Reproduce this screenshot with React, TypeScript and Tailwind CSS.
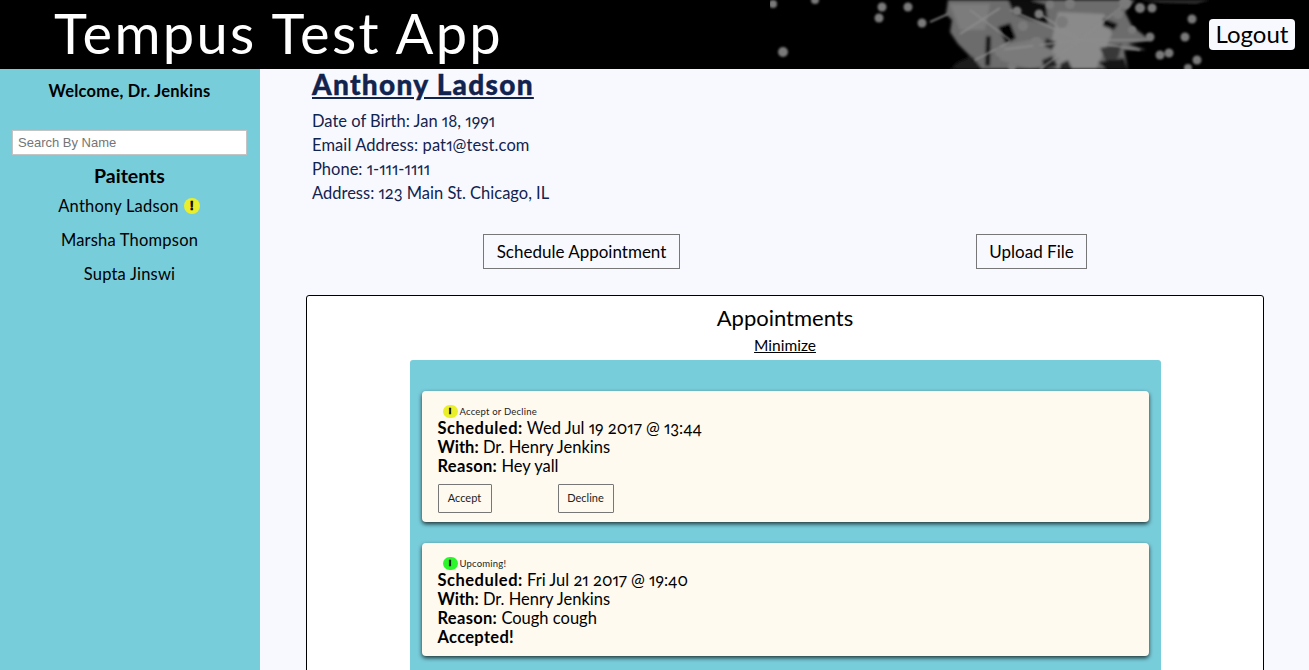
const sans = "font-['Lato','Open_Sans',sans-serif]";

function Alert({ color, wide }: { color: string; wide?: boolean }) {
  return (
    <span
      className={`inline-flex shrink-0 items-center justify-center rounded-full font-['Liberation_Sans',sans-serif] font-bold text-black [-webkit-text-stroke:0.6px_black] ${color} ${
        wide ? "h-[13px] w-[15px] text-[9px]" : "h-4 w-4 text-[12px]"
      }`}
    >
      !
    </span>
  );
}

function HeaderArt() {
  const dots = [
    [773, 4, 4], [815, 0, 4], [882, 7, 4.5], [908, 7, 4.5], [879, 18, 4.5], [922, 23, 4.5], [783, 52, 5],
    [1017, 11, 4.5], [1039, 14, 4.5], [1023, 26, 5], [1050, 5, 4], [1140, 8, 5], [1152, 8, 4.5], [1192, 19, 4.5],
    [1185, 37, 4.5], [1150, 37, 4.5], [1160, 55, 4.5], [1169, 53, 4.5], [1197, 60, 4.5], [1188, 68, 4],
    [1125, 3, 6], [1070, 4, 5], [1012, 66, 4], [1118, 14, 5], [1132, 30, 4], [1062, 22, 6], [1036, 42, 5], [1000, 52, 5],
  ];
  const spokes = [
    "M1080 40 L1150 40", "M1080 40 L1010 10", "M1080 40 L1000 50", "M1080 40 L1140 50", "M1080 40 L1125 4",
    "M1080 40 L1040 14", "M970 10 L1010 40", "M960 34 L1000 8", "M948 14 L930 22", "M975 60 L1010 42", "M1040 69 L1080 40",
  ];
  return (
    <svg className="absolute right-0 top-0 h-[69px] w-[539px]" viewBox="770 0 539 69" aria-hidden="true">
      <defs>
        <filter id="soft" x="-10%" y="-10%" width="120%" height="120%">
          <feGaussianBlur stdDeviation="1.6" />
        </filter>
        <filter id="dot" x="-10%" y="-10%" width="120%" height="120%">
          <feGaussianBlur stdDeviation="0.8" />
        </filter>
      </defs>
      <path d="M1140 0 L1210 0 L1196 4 L1160 3 Z" fill="#2a2a2a" filter="url(#dot)" />
      <g filter="url(#soft)">
        <path
          d="M948 0 L1135 0 L1125 12 L1132 26 L1150 40 L1128 44 L1146 50 L1124 50 L1128 69 L962 69 L974 60 L958 44 L950 32 L952 20 L946 14 Z"
          fill="#6c6c6c"
        />
        <path d="M1058 12 L1104 14 L1112 34 L1096 69 L1056 69 L1050 48 Z" fill="#8a8a8a" />
        <path d="M1000 46 L1040 38 L1060 60 L1030 69 L1000 60 Z" fill="#7a7a7a" />
        <path d="M950 4 L990 4 L985 30 L960 30 Z" fill="#7c7c7c" />
        <path d="M1008 0 L1030 0 L1046 4 L1048 24 L1030 20 L1014 14 Z" fill="#0c0c0c" />
        <path d="M998 27 L1010 23 L1016 38 L1006 44 Z" fill="#000" />
        <path d="M986 36 L991 36 L990 66 L985 66 Z" fill="#111" />
        <path d="M1103 18 L1118 24 L1114 30 L1103 26 Z" fill="#111" />
        <path d="M1100 48 L1122 44 L1118 58 L1106 62 Z" fill="#383838" />
        <path d="M1098 62 L1124 58 L1128 69 L1106 69 Z" fill="#141414" />
        <path d="M958 62 L972 56 L982 69 L950 69 Z" fill="#1a1a1a" />
        <path d="M1046 38 L1056 42 L1052 50 L1044 46 Z" fill="#2a2a2a" />
        <path d="M1042 60 L1052 56 L1058 66 L1044 69 Z" fill="#222" />
        <path d="M1060 64 L1068 60 L1072 69 L1060 69 Z" fill="#2a2a2a" />
      </g>
      <g filter="url(#dot)">
        {spokes.map((d) => (
          <path key={d} d={d} stroke="#8c8c8c" strokeWidth="1.5" fill="none" />
        ))}
        {dots.map(([x, y, r]) => (
          <circle key={`${x}-${y}`} cx={x} cy={y} r={r} fill="#7a7a7a" />
        ))}
      </g>
    </svg>
  );
}

function Card({
  alert,
  alertColor,
  scheduled,
  reason,
  accepted,
  actions,
}: {
  alert: string;
  alertColor: string;
  scheduled: string;
  reason: string;
  accepted?: boolean;
  actions?: boolean;
}) {
  return (
    <div className="rounded-[4px] bg-[#fffaf0] pl-4 pt-[13px] pb-[9px] shadow-[0_2px_4px_rgba(0,0,0,0.75)]">
      <div className="flex h-[15px] items-center pl-[5px] text-[9.5px] leading-none tracking-[0.2px] text-[#222]">
        <Alert color={alertColor} wide />
        <span className="ml-[2px]">{alert}</span>
      </div>
      <div className="text-[16.5px] leading-[19px] text-black">
        <div><b className="font-bold tracking-[0.5px]">Scheduled:</b> {scheduled}</div>
        <div><b className="font-bold">With:</b> Dr. Henry Jenkins</div>
        <div><b className="font-bold tracking-[0.3px]">Reason:</b> {reason}</div>
        {accepted && <div><b className="font-bold tracking-[0.3px]">Accepted!</b></div>}
      </div>
      {actions && (
        <div className="mt-2 flex text-[11px] text-[#222]">
          <button className="h-[29px] w-[54px] rounded-[1px] border border-[#777]">Accept</button>
          <button className="ml-[66px] h-[29px] w-[56px] rounded-[1px] border border-[#777]">Decline</button>
        </div>
      )}
    </div>
  );
}

export default function App() {
  return (
    <div className={`flex h-[670px] flex-col overflow-hidden bg-[#f8f9ff] oldstyle-nums proportional-nums ${sans}`}>
      <header className="relative flex h-[69px] shrink-0 items-center justify-between overflow-hidden bg-black pl-[54px] pr-[14px]">
        <HeaderArt />
        <h1 className="relative -mt-[5px] text-[56px] font-normal leading-[69px] tracking-[2.3px] text-white">Tempus Test App</h1>
        <button className="relative -mt-[1px] h-[31px] w-[86px] rounded-[4px] bg-[#f8f9ff] pb-[2px] text-[24px] leading-[27px] text-black">Logout</button>
      </header>
      <div className="flex min-h-0 flex-1">
        <aside className="w-[260px] shrink-0 bg-[#78cddb] text-center text-black">
          <p className="mt-[13px] pr-[1px] text-[16.5px] font-bold leading-[19px] tracking-[0.25px]">Welcome, Dr. Jenkins</p>
          <input
            placeholder="Search By Name"
            className="ml-[12px] mt-[29px] block h-[25px] w-[235px] border border-[#c4c4c4] bg-white px-[5px] font-['Liberation_Sans',sans-serif] text-[13px] text-black placeholder:text-[#757575]"
          />
          <h2 className="mt-[10px] pr-[1px] text-[19.5px] font-bold leading-[22px]">Paitents</h2>
          <ul className="text-[16.5px] leading-[20px] tracking-[0.2px]">
            <li className="mt-[9px] flex items-center justify-center gap-[5px] pr-[2px]">Anthony Ladson <Alert color="bg-[#e9ef2a]" /></li>
            <li className="mt-[14px] pr-[1px]">Marsha Thompson</li>
            <li className="mt-[14px] pr-[1px]">Supta Jinswi</li>
          </ul>
        </aside>
        <main className="min-w-0 flex-1 px-[46px] text-black">
          <section className="pl-[6px] text-[#12234e]">
            <h2 className="-mt-[1px] text-[28px] font-black leading-[32px] tracking-[1.3px] underline [-webkit-text-stroke:0.4px_#12234e]">Anthony Ladson</h2>
            <div className="mt-[9px] text-[16.5px] leading-[24px]">
              <p>Date of Birth: Jan 18, 1991</p>
              <p className="tracking-[0.1px]">Email Address: pat1@test.com</p>
              <p>Phone: 1-111-1111</p>
              <p>Address: 123 Main St. Chicago, IL</p>
            </div>
          </section>
          <div className="mt-[29px] flex h-[35px]">
            <button className="ml-[177px] w-[197px] border border-[#777] text-[17px]">Schedule Appointment</button>
            <button className="ml-[296px] w-[111px] border border-[#777] text-[17px]">Upload File</button>
          </div>
          <section className="mt-[26px] h-[500px] w-[958px] rounded-[3px] border border-black bg-white pt-[9px] text-center">
            <h3 className="text-[22px] leading-[26px]">Appointments</h3>
            <a className="mt-[5px] block text-[15.5px] leading-[19px] underline">Minimize</a>
            <div className="mx-auto mt-[5px] h-[400px] w-[751px] rounded-[3px] bg-[#78cddb] px-3 pt-[31px] text-left">
              <div className="flex flex-col gap-[21px]">
                <Card alert="Accept or Decline" alertColor="bg-[#e9ef2a]" scheduled="Wed Jul 19 2017 @ 13:44" reason="Hey yall" actions />
                <Card alert="Upcoming!" alertColor="bg-[#2cf52c]" scheduled="Fri Jul 21 2017 @ 19:40" reason="Cough cough" accepted />
              </div>
            </div>
          </section>
        </main>
      </div>
    </div>
  );
}
